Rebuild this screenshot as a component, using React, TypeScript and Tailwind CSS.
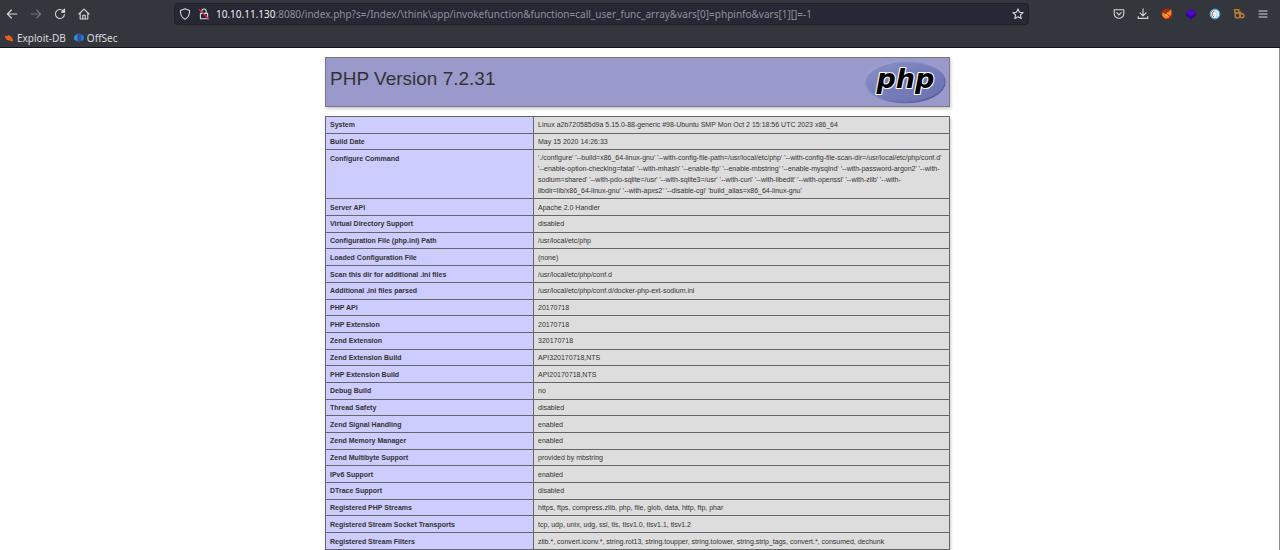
import type { ReactNode } from "react";

const rows: [string, string][] = [
  ["System", "Linux a2b720585d9a 5.15.0-88-generic #98-Ubuntu SMP Mon Oct 2 15:18:56 UTC 2023 x86_64"],
  ["Build Date", "May 15 2020 14:26:33"],
  [
    "Configure Command",
    "'./configure' '--build=x86_64-linux-gnu' '--with-config-file-path=/usr/local/etc/php' '--with-config-file-scan-dir=/usr/local/etc/php/conf.d' '--enable-option-checking=fatal' '--with-mhash' '--enable-ftp' '--enable-mbstring' '--enable-mysqlnd' '--with-password-argon2' '--with-sodium=shared' '--with-pdo-sqlite=/usr' '--with-sqlite3=/usr' '--with-curl' '--with-libedit' '--with-openssl' '--with-zlib' '--with-libdir=lib/x86_64-linux-gnu' '--with-apxs2' '--disable-cgi' 'build_alias=x86_64-linux-gnu'",
  ],
  ["Server API", "Apache 2.0 Handler"],
  ["Virtual Directory Support", "disabled"],
  ["Configuration File (php.ini) Path", "/usr/local/etc/php"],
  ["Loaded Configuration File", "(none)"],
  ["Scan this dir for additional .ini files", "/usr/local/etc/php/conf.d"],
  ["Additional .ini files parsed", "/usr/local/etc/php/conf.d/docker-php-ext-sodium.ini"],
  ["PHP API", "20170718"],
  ["PHP Extension", "20170718"],
  ["Zend Extension", "320170718"],
  ["Zend Extension Build", "API320170718,NTS"],
  ["PHP Extension Build", "API20170718,NTS"],
  ["Debug Build", "no"],
  ["Thread Safety", "disabled"],
  ["Zend Signal Handling", "enabled"],
  ["Zend Memory Manager", "enabled"],
  ["Zend Multibyte Support", "provided by mbstring"],
  ["IPv6 Support", "enabled"],
  ["DTrace Support", "disabled"],
  ["Registered PHP Streams", "https, ftps, compress.zlib, php, file, glob, data, http, ftp, phar"],
  ["Registered Stream Socket Transports", "tcp, udp, unix, udg, ssl, tls, tlsv1.0, tlsv1.1, tlsv1.2"],
  [
    "Registered Stream Filters",
    "zlib.*, convert.iconv.*, string.rot13, string.toupper, string.tolower, string.strip_tags, convert.*, consumed, dechunk",
  ],
];

function Line({ children, className = "" }: { children: ReactNode; className?: string }) {
  return (
    <svg
      viewBox="0 0 12 12"
      className={`size-3 ${className}`}
      fill="none"
      stroke="currentColor"
      strokeWidth="1.1"
      strokeLinecap="round"
      strokeLinejoin="round"
      aria-hidden="true"
    >
      {children}
    </svg>
  );
}

function ToolButton({ label, children }: { label: string; children: ReactNode }) {
  return (
    <button type="button" aria-label={label} className="flex size-6 items-center justify-center">
      {children}
    </button>
  );
}

function Toolbar() {
  return (
    <div className="flex h-7 items-center pr-[5px] text-[#d6d7da]">
      <nav aria-label="History" className="flex w-[174px] shrink-0">
        <ToolButton label="Back">
          <Line><path d="M10.8 6H1.6M5.4 2 1.4 6l4 4" /></Line>
        </ToolButton>
        <ToolButton label="Forward">
          <Line className="text-[#73757d]"><path d="M1.2 6h9.2M6.6 2l4 4-4 4" /></Line>
        </ToolButton>
        <ToolButton label="Reload">
          <Line>
            <path d="M10.4 6.6A4.5 4.5 0 1 1 9.2 2.9l1 1" />
            <path d="M10.6 1.2v3H7.6z" fill="currentColor" />
          </Line>
        </ToolButton>
        <ToolButton label="Home">
          <Line>
            <path d="M.9 6 6 1.2 11.1 6M2.2 5v6h7.6V5M4.8 11V7.2h2.4V11" />
          </Line>
        </ToolButton>
      </nav>
      <div className="flex h-[22px] max-w-[855px] grow items-center rounded-sm border border-[#1f212b] bg-[#262834] pr-1">
        <Line className="ml-1 shrink-0"><path d="M6 .8 10.6 2.4c.2 4.2-1.4 7.2-4.6 8.8C2.8 9.6 1.2 6.6 1.4 2.4z" /></Line>
        <Line className="ml-[7px] shrink-0">
          <path d="M2.4 5.4h7.2v5.4H2.4zM3.8 5.2V3.2a2.2 2.2 0 0 1 4.4 0v2" />
          <path d="M1.2 1.6l9.6 9.4" stroke="#e5244f" strokeWidth="1.3" />
        </Line>
        <span className="ml-[6px] grow truncate font-['Noto_Sans',sans-serif] text-[10px] leading-4 text-[#8e9098]">
          <span className="text-[#eeeef0]">10.10.11.130</span>
          :8080/index.php?s=/Index/\think\app/invokefunction&amp;function=call_user_func_array&amp;vars[0]=phpinfo&amp;vars[1][]=-1
        </span>
        <button type="button" aria-label="Bookmark this page">
          <Line><path d="M6 .9l1.5 3.3 3.6.4-2.7 2.4.8 3.6L6 8.800l-3.200 1.800.8-3.600L.9 4.600l3.600-.4z" /></Line>
        </button>
      </div>
      <div className="ml-auto flex">
        <ToolButton label="Save to Pocket">
          <Line>
            <path d="M1.2 1.8h9.6v3.6a4.8 4.8 0 0 1-9.6 0zM3.8 4.7 6 6.8l2.2-2.1" />
          </Line>
        </ToolButton>
        <ToolButton label="Downloads">
          <Line><path d="M6 .9v6.6M3 4.8l3 3 3-3M1.2 8.6v1.8h9.6V8.6" /></Line>
        </ToolButton>
        <ToolButton label="FoxyProxy">
          <svg viewBox="0 0 12 12" className="size-3" aria-hidden="true">
            <circle cx="6" cy="6" r="5" fill="#8f3a18" stroke="#c51a12" strokeWidth="1" />
            <path d="M1 4.5 4.5 6 8.5 3l2-2-.2 5.5L7.5 10 4 10.5 1.5 8z" fill="#f08a1d" />
            <path d="M4 7l3.5-2L6.5 8z" fill="#ffd08a" />
            <path d="M1.5 2.5 10 9.5" stroke="#c51a12" strokeWidth=".9" />
          </svg>
        </ToolButton>
        <ToolButton label="Wappalyzer">
          <svg viewBox="0 0 12 12" className="size-3" aria-hidden="true">
            <path d="M6 1 11 5v2.5L6 11.3 1 7.5V5z" fill="#3503a0" />
            <path d="M6 1 11 5 6 8.5 1 5z" fill="#4a08c4" />
          </svg>
        </ToolButton>
        <ToolButton label="Cookie editor">
          <svg viewBox="0 0 12 12" className="size-3" aria-hidden="true">
            <circle cx="6" cy="6" r="4.7" fill="#eef8fb" stroke="#46a9d2" strokeWidth="1.4" />
            <path d="M5.5 3a3.2 3.2 0 0 0-.5 6" fill="none" stroke="#d9533f" strokeWidth="1" />
            <path d="M6 3.5 8 5v3.5L6.5 9" fill="none" stroke="#8fc5da" strokeWidth=".8" />
          </svg>
        </ToolButton>
        <ToolButton label="Cookies">
          <svg viewBox="0 0 12 12" className="size-3" fill="none" stroke="#bd7a35" strokeWidth="1.4" aria-hidden="true">
            <path d="M1.600 1.800h4.200v3H1.800z" />
            <circle cx="4.6" cy="7.6" r="2.5" />
            <circle cx="9" cy="7.8" r="2" />
            <path d="M5.800 4.200h2v1.800" />
          </svg>
        </ToolButton>
        <ToolButton label="Open application menu">
          <Line><path d="M2 3h8M2 6h8M2 9h8" /></Line>
        </ToolButton>
      </div>
    </div>
  );
}

function Bookmarks() {
  return (
    <nav
      aria-label="Bookmarks"
      className="flex h-[19px] items-center gap-2 pl-1 font-['Noto_Sans',sans-serif] text-[10px] leading-4 text-[#d9dadd]"
    >
      <a href="#exploit-db" className="flex items-center gap-[3px]">
        <svg viewBox="0 0 10 10" className="size-[10px]" aria-hidden="true">
          <path d="M.8 2.5 3 3.2 4.5 2l3 2 1.7 3.2-.6 1.1-2.6-.5-3-.8L1.3 4.8z" fill="#ef6215" />
        </svg>
        Exploit-DB
      </a>
      <a href="#offsec" className="flex items-center gap-[3px]">
        <svg viewBox="0 0 10 10" className="size-[10px]" aria-hidden="true">
          <path d="M3.6.6v8L2.3 7.8.2 6.8V3.2z" fill="#1c9ad8" />
          <path d="M4.5.3h1.1v9.4H4.5z" fill="#5b4be0" />
          <path d="M6.5.6v8l1.2-.8 2.1-1V3.2z" fill="#2b72dc" />
        </svg>
        OffSec
      </a>
    </nav>
  );
}

function PhpLogo() {
  return (
    <svg viewBox="0 0 84 46" className="h-[46px] w-[84px]" role="img" aria-label="PHP logo">
      <defs>
        <linearGradient id="face" x1="0" y1="0" x2="1" y2="1">
          <stop offset="0" stopColor="#8b91c6" />
          <stop offset=".5" stopColor="#767db9" />
          <stop offset="1" stopColor="#6b70b0" />
        </linearGradient>
        <linearGradient id="rim" x1="0" y1="0" x2="1" y2="1">
          <stop offset="0" stopColor="#a9add7" />
          <stop offset=".5" stopColor="#8085bf" />
          <stop offset="1" stopColor="#484b8c" />
        </linearGradient>
      </defs>
      <ellipse cx="42" cy="23" rx="40" ry="20.5" fill="url(#face)" stroke="url(#rim)" strokeWidth="1.5" />
      <text
        x="42.5"
        y="29"
        textAnchor="middle"
        className="font-['DejaVu_Sans',sans-serif] text-[27px] font-bold italic"
        fill="#000"
        stroke="#fff"
        strokeWidth="2.2"
        strokeLinejoin="round"
        paintOrder="stroke"
      >
        php
      </text>
    </svg>
  );
}

export default function App() {
  return (
    <div className="flex h-screen flex-col overflow-hidden bg-white">
      <header className="shrink-0 border-b border-[#14151c] bg-[#34363e]">
        <Toolbar />
        <Bookmarks />
      </header>
      <main className="grow overflow-hidden border-r border-[#8d8d8d] pr-1 font-['Liberation_Sans',Arial,sans-serif] text-[#333]">
        <div className="mx-auto mt-[9px] flex w-full max-w-[625px] flex-col gap-[9px]">
          <div className="flex h-[50px] items-start justify-between border border-[#77777c] bg-[#9999cc] pr-[2px] pl-1 shadow-[1px_2px_3px_#ccc]">
            <h1 className="pt-[9px] text-[19px] leading-6">PHP Version 7.2.31</h1>
            <a href="#php" className="pt-px">
              <PhpLogo />
            </a>
          </div>
          <table className="h-[434px] w-full border-collapse text-left text-[7px] leading-[10px] shadow-[1px_2px_3px_#ccc]">
            <tbody>
              {rows.map(([name, value]) => {
                const long = value.length > 200;
                return (
                  <tr key={name} className={long ? "leading-[11px]" : ""}>
                    <th
                      scope="row"
                      className={`w-1/3 border border-[#666] bg-[#ccccff] px-1 font-bold ${long ? "py-px align-top" : "pt-[3px] pb-[2px]"}`}
                    >
                      <span className={long ? "block pt-[2px]" : ""}>{name}</span>
                    </th>
                    <td className={`border border-[#666] bg-[#dddddd] px-1 ${long ? "py-px" : "pt-[3px] pb-[2px]"}`}>
                      {value}
                    </td>
                  </tr>
                );
              })}
            </tbody>
          </table>
        </div>
      </main>
    </div>
  );
}
